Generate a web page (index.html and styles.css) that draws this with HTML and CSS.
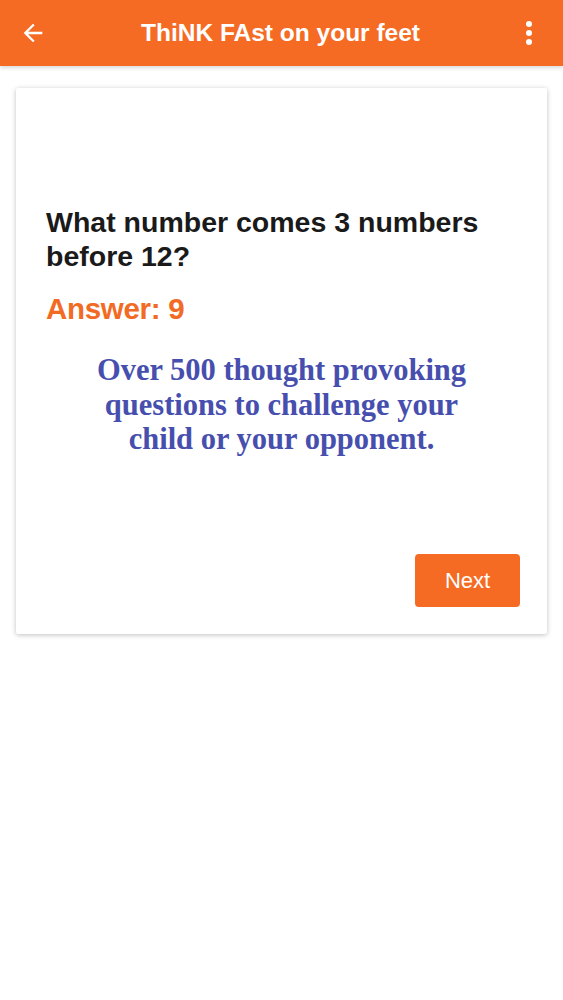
FILE: index.html
```html
<!DOCTYPE html>
<html>
<head>
<meta charset="utf-8">
<link rel="stylesheet" href="styles.css">
</head>
<body>
<header class="appbar">
  <svg class="back" width="28" height="28" viewBox="0 0 24 24"><path d="M20 11H7.83l5.59-5.59L12 4l-8 8 8 8 1.41-1.41L7.83 13H20v-2z" fill="#fff"/></svg>
  <h1 class="title">ThiNK FAst on your feet</h1>
  <svg class="more" width="8" height="26" viewBox="0 0 8 26"><circle cx="4" cy="4" r="3" fill="#fff"/><circle cx="4" cy="13" r="3" fill="#fff"/><circle cx="4" cy="22" r="3" fill="#fff"/></svg>
</header>
<main class="content">
  <section class="card">
    <p class="question">What number comes 3 numbers before 12?</p>
    <p class="answer">Answer: 9</p>
    <p class="promo">Over 500 thought provoking<br>questions to challenge your<br>child or your opponent.</p>
    <div class="actions"><button class="next">Next</button></div>
  </section>
</main>
</body>
</html>
```
FILE: styles.css
```css
* { box-sizing: border-box; }
body { margin: 0; background: #fff; font-family: "Liberation Sans", Arial, sans-serif; }
.appbar {
  height: 66px; background: #f56b24; display: flex; align-items: center;
  padding: 0 30px 0 19px; box-shadow: 0 2px 4px rgba(0,0,0,0.15);
}
.back { flex: none; }
.title { flex: 1; margin: 0; text-align: center; color: #fff; font-size: 24.5px; font-weight: bold; padding-right: 11px; }
.more { flex: none; }
.content { padding: 22px 16px; }
.card {
  background: #fff; height: 546px; padding: 117px 30px 0;
  box-shadow: 0 1px 5px rgba(0,0,0,0.25); border-radius: 2px;
  display: flex; flex-direction: column;
}
.question { margin: 0; font-size: 28.5px; font-weight: bold; line-height: 34px; color: #1a1a1a; }
.answer { margin: 19px 0 0; font-size: 29.5px; font-weight: bold; color: #f26b24; line-height: 34px; letter-spacing: -0.3px; }
.promo { margin: 27px 0 0; text-align: center; font-family: "Liberation Serif", "Times New Roman", serif; font-weight: bold; font-size: 30.5px; line-height: 34.5px; color: #474fae; }
.actions { margin-top: auto; margin-bottom: 27px; display: flex; justify-content: flex-end; margin-right: -3px; }
.next {
  width: 105px; height: 53px; border: 0; border-radius: 4px; background: #f56b24;
  color: #fff; font-family: "Liberation Sans", Arial, sans-serif; font-size: 22px;
}
```
